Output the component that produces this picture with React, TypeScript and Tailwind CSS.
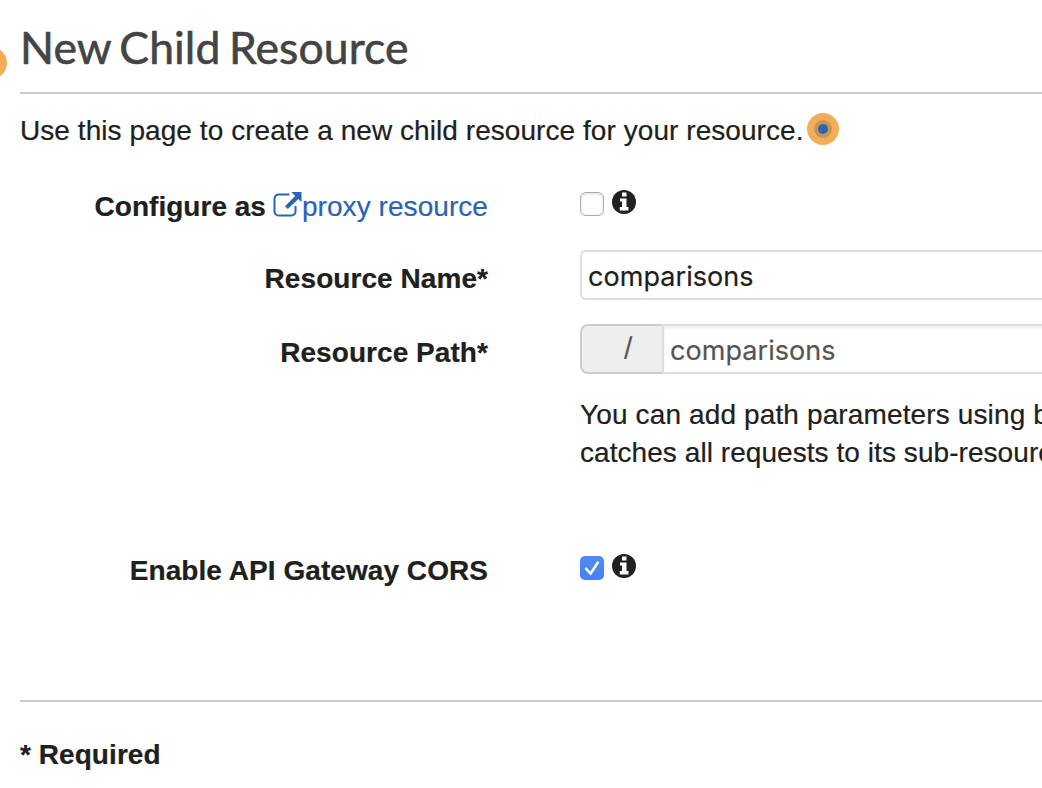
import type { ReactNode } from "react";

function InfoIcon() {
  return (
    <svg viewBox="0 0 24 24" className="size-6 shrink-0" aria-label="info">
      <circle cx="12" cy="12" r="12" fill="#202020" />
      <path d="M10 2.500h4.500v4H10zM8 8.500h6.500v8.500h2v3.500H7.800v-3.500H10v-5.500H8z" fill="#fff" />
    </svg>
  );
}

function ExternalIcon() {
  return (
    <svg viewBox="0 0 30 26" className="-ml-px h-[26px] w-[30px] shrink-0" aria-hidden="true">
      <path
        d="M16.500 3.500H5.500A4 4 0 0 0 1.500 7.500v13a4 4 0 0 0 4 4h13a4 4 0 0 0 4-4V15"
        fill="none"
        stroke="#2a64b5"
        strokeWidth="2"
      />
      <path d="M18.300 1h10.200v10.200l-3.200-3.200-10.600 10-2.700-2.700 10.200-10.400z" fill="#2a64b5" />
    </svg>
  );
}

function Marker({ className }: { className: string }) {
  return (
    <span className={"flex size-8 shrink-0 items-center justify-center rounded-full bg-[#f4ad57] " + className}>
      <span className="flex size-[18px] items-center justify-center rounded-full bg-[#c8954f]">
        <span className="size-[10px] rounded-full bg-[#2a64b5]" />
      </span>
    </span>
  );
}

function Row({ label, className, children }: { label: ReactNode; className: string; children: ReactNode }) {
  return (
    <div className={"flex items-start " + className}>
      <div className="mt-px flex w-[488px] shrink-0 justify-end font-bold leading-10 tracking-[0.06px]">{label}</div>
      <div className="ml-[92px] min-w-0 flex-1">{children}</div>
    </div>
  );
}

export default function App() {
  return (
    <main className="relative flex h-[788px] w-[1042px] flex-col overflow-hidden whitespace-nowrap bg-white font-['Liberation_Sans',Arial,sans-serif] text-[28px] leading-10 tracking-[0.06px] text-[#202020] [-webkit-text-stroke:0.2px]">
      <Marker className="absolute -left-[25px] top-[47px]" />
      <h1 className="ml-5 mt-[17px] h-[75px] font-[Lato,sans-serif] text-[44.5px] leading-[60px] tracking-[0.09px] text-[#444] [-webkit-text-stroke:0.6px] [word-spacing:-3px]">
        <span>New Child Resource</span>
      </h1>
      <hr className="ml-5 border-t-2 border-[#ccc]" />
      <div className="ml-5 mt-4 flex h-10 items-center">
        <span className="pt-0.5">Use this page to create a new child resource for your resource.</span>
        <Marker className="mb-0.5 ml-[3px]" />
      </div>

      <Row
        className="mt-9 h-[64px]"
        label={
          <>
            <span className="tracking-[0.02px]">Configure as</span>
            <a className="ml-2 flex font-normal text-[#2a64b5]">
              <span className="pt-1"><ExternalIcon /></span>
              <span className="-ml-px">proxy resource</span>
            </a>
          </>
        }
      >
        <div className="flex gap-2 pt-1">
          <span className="mt-0.5 size-6 rounded-[6px] border border-[#aaa] bg-white shadow-[inset_0_1px_3px_#ddd]" />
          <InfoIcon />
        </div>
      </Row>

      <Row className="h-[74px]" label={<span className="mt-2">Resource Name*</span>}>
        <div className="-mr-4 flex h-[50px] items-center rounded-md border-2 border-[#ddd] pl-1.5 pt-1 font-[Inter,sans-serif] text-[27px]">
          <span>comparisons</span>
        </div>
      </Row>

      <Row className="h-[71px]" label={<span className="mt-2">Resource Path*</span>}>
        <div className="-mr-4 flex h-[50px] font-[Inter,sans-serif] text-[27px] text-[#555]">
          <span className="w-[82px] rounded-l-lg border-2 border-r-0 border-[#ccc] bg-[#eee] pl-[41.500px] pt-px text-[26px]">/</span>
          <span className="flex flex-1 items-center border-2 border-[#ddd] pl-1.5 pt-1 shadow-[inset_0_2px_3px_#eee]">
            comparisons
          </span>
        </div>
      </Row>

      <p className="ml-[580px] h-[155px] pt-px leading-[38px]">
        <span className="tracking-[0.13px]">You can add path parameters using brackets.</span>
        <br />
        <span className="tracking-[0.06px]">catches all requests to its sub-resources.</span>
      </p>

      <Row className="h-[150px]" label={<span>Enable API Gateway CORS</span>}>
        <div className="flex gap-2 pt-1">
          <span className="mt-0.5 flex size-6 items-center justify-center rounded-[5px] bg-gradient-to-b from-[#528bf4] to-[#4680f2]">
            <svg viewBox="0 0 24 24" className="size-6" aria-hidden="true">
              <path d="M6.200 12.800l4.300 5L17.800 6.500" fill="none" stroke="#fff" strokeWidth="2.500" strokeLinecap="round" strokeLinejoin="round" />
            </svg>
          </span>
          <InfoIcon />
        </div>
      </Row>

      <hr className="ml-5 border-t-2 border-[#ccc]" />
      <p className="ml-5 mt-[33px] font-bold">* Required</p>
    </main>
  );
}
